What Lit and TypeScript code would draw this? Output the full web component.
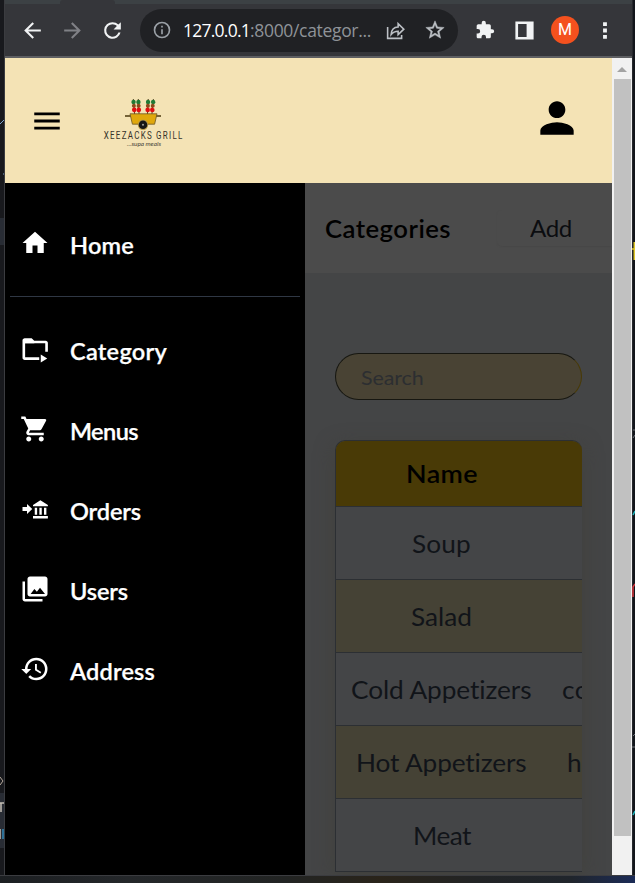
import { LitElement, html, css, svg } from "lit";
import { customElement, property } from "lit/decorators.js";

/** A one-line label, widened by `stretch` and tracked to a set measure. */
@customElement("fit-label")
class FitLabel extends LitElement {
  @property() text = "";
  @property({ type: Number }) measure = 0;
  @property({ type: Number }) stretch = 1.07;
  static styles = css`
    :host { display: inline-block; white-space: pre; text-align: left; }
    span { display: inline-block; transform-origin: 0 50%; }
  `;
  updated() {
    const s = this.renderRoot.querySelector("span") as HTMLElement;
    s.style.transform = "none";
    s.style.letterSpacing = "0";
    const natural = s.getBoundingClientRect().width;
    s.style.letterSpacing = `${(this.measure / this.stretch - natural) / this.text.length}px`;
    s.style.transform = `scaleX(${this.stretch})`;
    this.style.width = `${this.measure}px`;
  }
  render() { return html`<span>${this.text}</span>`; }
}

const icons: Record<string, unknown> = {
  home: svg`<path d="M10 20v-6h4v6h5v-8h3L12 3 2 12h3v8z"/>`,
  folder: svg`<path d="M3.800 3.300h5.500l2.100 2.100h9.100c1 0 1.800.8 1.800 1.800v7h-2.100V7.400H4.100v11.200h11.300v2.100H3.800c-1 0-1.800-.8-1.800-1.800V5.100c0-1 .8-1.800 1.800-1.800zM16.600 16.400v6.300l5.200-3.100z"/><path d="M3 4h6.500l2 3.400H3z"/>`,
  cart: svg`<path d="M7 18c-1.100 0-1.990.9-1.990 2S5.900 22 7 22s2-.9 2-2-.9-2-2-2zM1 2v2h2l3.600 7.590-1.350 2.450c-.16.280-.25.610-.25.960 0 1.100.9 2 2 2h12v-2H7.420c-.14 0-.25-.11-.25-.25l.03-.12.9-1.630h7.450c.75 0 1.410-.41 1.750-1.030l3.580-6.490A1.003 1.003 0 0 0 20 4H5.210l-.94-2H1zm16 16c-1.100 0-1.990.9-1.990 2s.89 2 1.990 2 2-.9 2-2-.9-2-2-2z"/>`,
  bank: svg`<path d="M2 10.400h3.600V8l4.200 4-4.200 4v-2.400H2zM10.400 8.800 16.300 5l6 3.800v1h-11.900zM11.800 10.900h1.900v5.700h-1.900zM15.500 10.900h1.900v5.700h-1.900zM19.200 10.900h1.900v5.700h-1.900zM10.400 17.600h11.900v1.900H10.400z"/>`,
  photos: svg`<path d="M22 16V4c0-1.100-.9-2-2-2H8c-1.100 0-2 .9-2 2v12c0 1.100.9 2 2 2h12c1.100 0 2-.9 2-2zm-13.500 0 3-4 2 2.200L16 11l4 5zM2 6v14c0 1.100.9 2 2 2h14v-2H4V6H2z"/>`,
  history: svg`<path d="M13 3a9 9 0 0 0-9 9H1l3.890 3.890.07.14L9 12H6c0-3.870 3.130-7 7-7s7 3.130 7 7-3.130 7-7 7c-1.930 0-3.680-.79-4.940-2.060l-1.420 1.420A8.954 8.954 0 0 0 13 21a9 9 0 0 0 0-18zm-1 5v5l4.280 2.540.72-1.210-3.500-2.080V8H12z"/>`,
  menu: svg`<path d="M3 18h18v-2H3v2zm0-5h18v-2H3v2zm0-7v2h18V6H3z"/>`,
  person: svg`<path d="M12 12c2.210 0 4-1.790 4-4s-1.790-4-4-4-4 1.790-4 4 1.790 4 4 4zm0 2c-2.670 0-8 1.340-8 4v2h16v-2c0-2.660-5.330-4-8-4z"/>`,
  back: svg`<path d="M20 11H7.830l5.590-5.590L12 4l-8 8 8 8 1.410-1.410L7.830 13H20v-2z"/>`,
  forward: svg`<path d="M12 4l-1.410 1.410L16.170 11H4v2h12.170l-5.580 5.590L12 20l8-8z"/>`,
  reload: svg`<path d="M17.650 6.350A7.958 7.958 0 0 0 12 4a8 8 0 1 0 7.730 10h-2.080A6 6 0 1 1 12 6c1.660 0 3.140.69 4.220 1.780L13 11h7V4l-2.350 2.350z"/>`,
  info: svg`<path d="M11 7h2v2h-2zm0 4h2v6h-2zm1-9a10 10 0 1 0 0 20 10 10 0 0 0 0-20zm0 18a8 8 0 1 1 0-16 8 8 0 0 1 0 16z"/>`,
  share: svg`<path fill="none" stroke="currentColor" stroke-width="1.800" d="M3 8v13h16v-4M7 16.500c.3-5 3-8.300 8-8.500V4.200l6.500 6.300-6.500 6.200v-3.900c-3.600 0-6 1.100-8 3.700z"/>`,
  star: svg`<path stroke="currentColor" stroke-width=".5" d="M22 9.240l-7.190-.62L12 2 9.190 8.630 2 9.240l5.460 4.730L5.820 21 12 17.270 18.180 21l-1.630-7.030L22 9.240zM12 15.400l-3.760 2.270 1-4.280-3.320-2.880 4.380-.38L12 6.100l1.710 4.040 4.380.38-3.320 2.880 1 4.280L12 15.400z"/>`,
  puzzle: svg`<path d="M20.500 11H19V7a2 2 0 0 0-2-2h-4V3.500a2.500 2.500 0 0 0-5 0V5H4a2 2 0 0 0-2 2v3.800h1.500a2.700 2.700 0 0 1 0 5.400H2V20c0 1.100.9 2 2 2h3.800v-1.500a2.700 2.700 0 0 1 5.400 0V22H17a2 2 0 0 0 2-2v-4h1.500a2.500 2.500 0 0 0 0-5z"/>`,
  panel: svg`<path fill-rule="evenodd" d="M2.500 2.500h19v19h-19zM5.300 5.100v13.800h8.900V5.100z"/>`,
  dots: svg`<path d="M10.500 3.400h4v4h-4zM10.500 10h4v4h-4zM10.500 16.600h4v4h-4z"/>`,
};

@customElement("glyph-icon")
class GlyphIcon extends LitElement {
  @property() name = "";
  static styles = css`
    :host { display: inline-block; flex: none; }
    svg { display: block; width: 100%; height: 100%; fill: currentColor; }
  `;
  render() { return html`<svg viewBox="0 0 24 24">${icons[this.name]}</svg>`; }
}

@customElement("browser-bar")
class BrowserBar extends LitElement {
  static styles = css`
    :host { display: block; height: 58px; flex: none; font-family: "Open Sans", sans-serif; }
    .tabs { height: 4px; background: #3c4144; display: flex; }
    .tab { margin-left: 55px; width: 55px; background: #35363a; border-radius: 3px 3px 0 0; }
    .bar { height: 52px; background: #35363a; display: flex; align-items: center; box-sizing: border-box; padding-left: 15px; color: #f1f3f4; }
    .nav { width: 25px; height: 25px; margin-right: 15px; }
    .reload { margin-right: 15px; }
    .off { color: #808186; }
    .url { display: flex; align-items: center; width: 318px; height: 43px; border-radius: 22px; background: #202124; color: #bdc1c6; flex: none; box-sizing: border-box; padding-left: 12px; }
    .info { width: 20px; height: 20px; margin-right: 11px; color: #9aa0a6; }
    .addr { display: flex; width: 189px; font-size: 17.500px; line-height: 24px; color: #8f9398; }
    .host { color: #fff; }
    .share { width: 21px; height: 21px; margin: 0 18px 0 13px; }
    .star { width: 22px; height: 22px; }
    .puzzle { width: 20px; height: 20px; margin-left: 17px; }
    .panel { width: 23px; height: 23px; margin-left: 18px; }
    .me { width: 28px; height: 28px; border-radius: 50%; background: #f4511e; margin-left: 15px; text-align: center; font: 16px/28px Roboto, sans-serif; color: #fff; }
    .dots { width: 23px; height: 23px; margin-left: 14px; }
    .rule { height: 2px; background: #5e5f62; }
  `;
  render() {
    return html`
      <div class="tabs"><div class="tab"></div></div>
      <div class="bar">
        <glyph-icon class="nav" name="back"></glyph-icon>
        <glyph-icon class="nav off" name="forward"></glyph-icon>
        <glyph-icon class="nav reload" name="reload"></glyph-icon>
        <div class="url">
          <glyph-icon class="info" name="info"></glyph-icon>
          <div class="addr">
            <fit-label class="host" text="127.0.0.1" measure="67" stretch="1"></fit-label>
            <fit-label text=":8000/categor..." measure="121" stretch="1"></fit-label>
          </div>
          <glyph-icon class="share" name="share"></glyph-icon>
          <glyph-icon class="star" name="star"></glyph-icon>
        </div>
        <glyph-icon class="puzzle" name="puzzle"></glyph-icon>
        <glyph-icon class="panel" name="panel"></glyph-icon>
        <div class="me">M</div>
        <glyph-icon class="dots" name="dots"></glyph-icon>
      </div>
      <div class="rule"></div>`;
  }
}

@customElement("grill-logo")
class GrillLogo extends LitElement {
  static styles = css`
    :host { display: block; width: 84px; height: 54px; }
    svg { display: block; }
    .name { font: 10px "Roboto", sans-serif; fill: #35322a; letter-spacing: 1.900px; }
    .tag { font: italic 6.500px "Lato", sans-serif; fill: #4a463b; }
  `;
  skewer(x: number, lean: number) {
    return svg`<g transform="translate(${x} 0) rotate(${lean} 0 14)">
      <path d="M0 0V16" stroke="#5b3a1c" stroke-width="1"/>
      <circle cx="0" cy="3" r="2.200" fill="#1f7a35"/>
      <circle cx="0" cy="6.800" r="2" fill="#8a4b1c"/>
      <circle cx="0" cy="10.900" r="2.300" fill="#e00d10"/>
    </g>`;
  }
  render() {
    return html`<svg width="84" height="54" viewBox="0 0 84 54">
      ${this.skewer(31.500, -5)}${this.skewer(36, -3)}${this.skewer(44.500, 3)}${this.skewer(49, 6)}
      <path d="M22 17h36" stroke="#756337" stroke-width="1.800"/>
      <path d="M27 14.800h27l-2.400 10.400H29.400z" fill="#e0a80c" stroke="#695426" stroke-width=".8"/>
      <circle cx="40" cy="25.700" r="5.200" fill="#b89a48"/>
      <circle cx="40" cy="25.700" r="4.300" fill="#181817"/>
      <circle cx="40" cy="25.700" r="1" fill="#a8a59c"/>
      <text class="name" x="1" y="40.200" transform="scale(.8 1)" textLength="100" lengthAdjust="spacing">XEEZACKS GRILL</text>
      <text class="tag" x="24" y="47" textLength="34">...supa meals</text>
    </svg>`;
  }
}

@customElement("side-nav")
class SideNav extends LitElement {
  static styles = css`
    :host { display: block; width: 300px; flex: none; background: #000; color: #fff; box-sizing: border-box; padding-top: 22px; font: 600 22px/30px Lato, sans-serif; -webkit-text-stroke: .25px #fff; }
    .item { display: flex; align-items: center; height: 80px; padding-left: 15px; box-sizing: border-box; }
    glyph-icon { width: 30px; height: 30px; margin: 0 19.500px 4px 0; }
    fit-label { margin-top: 1px; }
    .divider { height: 1px; background: #2f3744; margin: 11px 5px 14px; }
  `;
  item(icon: string, text: string, measure: number) {
    return html`<div class="item"><glyph-icon name=${icon}></glyph-icon><fit-label text=${text} measure=${measure}></fit-label></div>`;
  }
  render() {
    return html`${this.item("home", "Home", 64)}
      <div class="divider"></div>
      ${this.item("folder", "Category", 97)}
      ${this.item("cart", "Menus", 68)}
      ${this.item("bank", "Orders", 71)}
      ${this.item("photos", "Users", 58)}
      ${this.item("history", "Address", 85)}`;
  }
}

@customElement("category-page")
class CategoryPage extends LitElement {
  static styles = css`
    :host { display: block; flex: 1; min-width: 0; overflow: hidden; background: #444546; font-family: Lato, sans-serif; }
    .head { height: 90px; background: #4b4b4b; display: flex; align-items: center; box-sizing: border-box; padding-left: 19.500px; }
    .title { font-size: 24px; font-weight: 600; color: #000; width: 172.500px; }
    .add { flex: 1; height: 36px; border-radius: 5px 0 0 5px; box-shadow: 0 1px 1px #484848; display: flex; align-items: center; box-sizing: border-box; padding-left: 33px; font-size: 22.500px; color: #0b0d10; }
    .search { margin: 80px 30px 0; height: 47px; box-sizing: border-box; border: 1px solid #171711; border-right-color: #493a06; border-radius: 24px; background: #494334; display: flex; align-items: center; padding-left: 25px; font-size: 20px; color: #2c2e31; }
    .table { margin: 40px 30px 0; border: 1px solid #2c2f33; border-right: 0; border-radius: 10px 10px 0 0; overflow: hidden; box-shadow: 0 6px 20px rgba(65, 64, 58, .8); }
    .row { height: 72px; border-bottom: 1px solid #2c2f33; background: #444547; display: grid; grid-template-columns: 211px 120px; align-items: center; font-size: 24.500px; line-height: 32px; color: #111419; }
    .row:nth-child(odd) { background: #454235; }
    .row:last-child { border-bottom: 0; }
    .row.top { height: 65px; background: #493a06; color: #000; font-weight: 600; font-size: 24px; }
    .name { text-align: center; white-space: nowrap; padding-top: 1px; }
    .desc { padding: 1px 0 0 14.500px; white-space: nowrap; }
    .hot { padding-left: 19.500px; }
    .top .name { padding-top: 0; }
  `;
  render() {
    const rows: [string, number, string, number, string][] = [
      ["Soup", 59, "", 0, ""],
      ["Salad", 61, "", 0, ""],
      ["Cold Appetizers", 181, "cold", 50, ""],
      ["Hot Appetizers", 171, "hot", 38, "hot"],
      ["Meat", 58, "", 0, ""],
    ];
    return html`
      <div class="head">
        <div class="title"><fit-label text="Categories" measure="126"></fit-label></div>
        <div class="add"><fit-label text="Add" measure="42"></fit-label></div>
      </div>
      <div class="search"><fit-label text="Search" measure="62.5"></fit-label></div>
      <div class="table">
        <div class="row top"><div class="name"><fit-label text="Name" measure="72" stretch="1.12"></fit-label></div></div>
        ${rows.map(([n, w, d, dw, c]) => html`<div class="row">
          <div class="name"><fit-label text=${n} measure=${w}></fit-label></div>
          <div class="desc ${c}">${d ? html`<fit-label text=${d} measure=${dw}></fit-label>` : ""}</div>
        </div>`)}
      </div>`;
  }
}

@customElement("app-root")
class AppRoot extends LitElement {
  static styles = css`
    :host { display: flex; flex-direction: column; width: 635px; height: 883px; overflow: hidden; background: #18191d; }
    .desk { display: flex; height: 875px; flex: none; }
    .left { width: 4px; border-right: 1px solid #3b3c40; flex: none; background: #18191d; }
    .right { width: 3px; flex: none; background: #12151b; }
    .left svg, .right svg { display: block; }
    .window { width: 627px; flex: none; display: flex; flex-direction: column; }
    .view { flex: 1; display: flex; min-height: 0; }
    .page { width: 607px; display: flex; flex-direction: column; }
    .banner { height: 125px; flex: none; background: #f4e3b5; display: flex; align-items: flex-start; box-sizing: border-box; padding: 35px 30px 0 25px; }
    .burger { width: 34px; height: 34px; margin: 10.700px 39.500px 0 -.5px; }
    grill-logo { margin-top: 6px; }
    .person { width: 50px; height: 50px; margin-left: auto; }
    .body { flex: 1; display: flex; min-height: 0; }
    .scroll { width: 20px; background: #f1f1f1; display: flex; flex-direction: column; align-items: center; }
    .arrow { margin: 9px 0 7px; border: 5px solid transparent; border-top: 0; border-bottom-color: #a3a3a3; }
    .thumb { width: 17px; height: 757px; background: #c1c1c1; }
    .below { height: 8px; flex: none; box-sizing: border-box; border-top: 1px solid #3b3c40; background: linear-gradient(90deg, #1c1f22, #24272a 20%, #222423 45%, #2a241a 60%, #222425 75%, #20252c 90%, #1b2b57); }
  `;
  render() {
    return html`
      <div class="desk">
        <div class="left"><svg width="4" height="875" fill="none">
          <path d="M0 218h4v27H0zM0 793h4v55H0z" fill="#282c34"/>
          <path d="M0 124l4-4M3 174h1" stroke="#7fa5cf"/>
          <path d="M0 777l3 4-3 4" stroke="#b5a99c"/>
          <path d="M0 803h4M1 803v9M0 829v10" stroke="#c5bfb5" stroke-width="1.500"/>
          <path d="M3 829v10" stroke="#3188b8" stroke-width="1.500"/>
        </svg></div>
        <div class="window">
          <browser-bar></browser-bar>
          <div class="view">
            <div class="page">
              <div class="banner">
                <glyph-icon class="burger" name="menu"></glyph-icon>
                <grill-logo></grill-logo>
                <glyph-icon class="person" name="person"></glyph-icon>
              </div>
              <div class="body"><side-nav></side-nav><category-page></category-page></div>
            </div>
            <div class="scroll"><div class="arrow"></div><div class="thumb"></div></div>
          </div>
        </div>
        <div class="right"><svg width="3" height="875" fill="none">
          <path d="M0 0v875" stroke="#3b3c40"/>
          <path d="M3 242H1.500v18H3z" fill="#dfc72c"/>
          <path d="M0 249h3" stroke="#dfc72c" stroke-width="1.500"/>
          <path d="M1 515l2-4M1 815l2-4" stroke="#20b6bd" stroke-width="1.500"/>
          <path d="M1 597v-10l2-3" stroke="#d9363e" stroke-width="1.500"/>
          <path d="M1 430h2M1 438l2-3M1 736l2-2M0 747h3" stroke="#6c7076"/>
        </svg></div>
      </div>
      <div class="below"></div>`;
  }
}
